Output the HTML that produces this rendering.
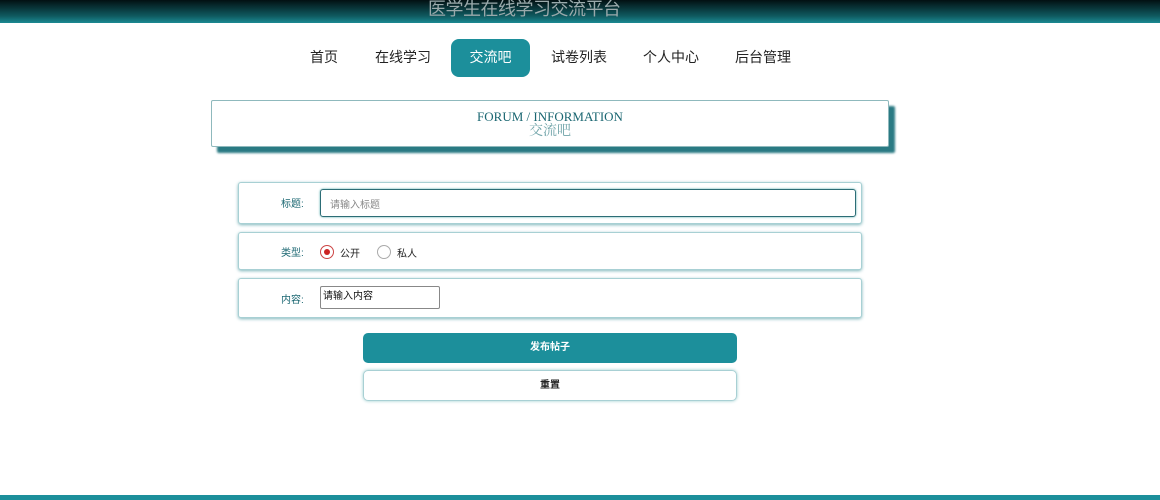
<!DOCTYPE html>
<html><head><meta charset="utf-8"><style>
*{margin:0;padding:0;box-sizing:border-box}
body{width:1160px;height:500px;overflow:hidden;background:#fff;font-family:"Liberation Sans","Noto Sans CJK SC",sans-serif;position:relative}
.hdr{position:absolute;left:0;top:0;width:1160px;height:23px;background:linear-gradient(#021012,#0f5a60 70%,#1b8a93)}
.hdr span{position:absolute;left:428px;top:-5px;font-size:18px;color:#9aa9ab;letter-spacing:-0.5px}
.nav{position:absolute;top:39px;left:0;width:1160px;height:38px}
.nav a{position:absolute;top:0;height:38px;line-height:36px;font-size:14px;color:#222;text-decoration:none}
.nav a.on{background:#1c8f9b;color:#fff;border-radius:8px;width:79px;text-align:center;left:451px}
.banner{position:absolute;left:211px;top:100px;width:678px;height:47px;border:1px solid #8fb9bd;border-radius:2px;box-shadow:6px 6px 2px #2a7a83;text-align:center;font-family:"Liberation Serif","Noto Serif CJK SC",serif;color:#1b6772;font-size:13px;line-height:14px;padding-top:9px;background:#fff}
.banner div+div{color:#6fa3a8;font-size:14px;line-height:16px}
.row{position:absolute;left:238px;width:624px;border:1px solid #a8d0d4;border-radius:3px;box-shadow:0 1px 3px #7fb6bb;background:#fff}
.lbl{position:absolute;left:42px;font-size:10px;color:#1b6772}
.inp{position:absolute;left:81px;top:6px;width:536px;height:28px;border:1px solid #2c6d76;border-radius:3px;box-shadow:0 0 2px #5aa;font-size:10px;color:#888;padding:6px 9px}
.rad{position:absolute;width:14px;height:14px;border-radius:50%;border:1px solid #aaa;top:12px}
.btn{position:absolute;left:363px;width:374px;height:30px;border-radius:5px;text-align:center;line-height:30px;font-size:10px;font-weight:bold}
</style></head><body>
<div class="hdr"><span>医学生在线学习交流平台</span></div>
<div class="nav">
<a style="left:310px">首页</a><a style="left:375px">在线学习</a><a class="on">交流吧</a><a style="left:551px">试卷列表</a><a style="left:643px">个人中心</a><a style="left:735px">后台管理</a>
</div>
<div class="banner"><div>FORUM / INFORMATION</div><div>交流吧</div></div>
<div class="row" style="top:182px;height:42px"><span class="lbl" style="top:12px">标题:</span><div class="inp">请输入标题</div></div>
<div class="row" style="top:232px;height:38px"><span class="lbl" style="top:11px">类型:</span>
<div class="rad" style="left:81px;border-color:#c44"><div style="width:6px;height:6px;border-radius:50%;background:#c22;margin:3px"></div></div>
<span style="position:absolute;left:101px;top:12px;font-size:10px;color:#222">公开</span>
<div class="rad" style="left:138px"></div>
<span style="position:absolute;left:158px;top:12px;font-size:10px;color:#222">私人</span></div>
<div class="row" style="top:278px;height:40px"><span class="lbl" style="top:12px">内容:</span>
<div style="position:absolute;left:81px;top:7px;width:120px;height:23px;border:1px solid #888;border-radius:2px;font-size:10px;color:#111;padding:0 2px">请输入内容</div></div>
<div class="btn" style="top:333px;background:#1c8f9b;color:#fff">发布帖子</div>
<div class="btn" style="top:370px;height:31px;border:1px solid #a8d0d4;box-shadow:0 0 3px #9cc;color:#222">重置</div>
<div style="position:absolute;left:0;top:495px;width:1160px;height:5px;background:#1c8f9b"></div>
</body></html>
